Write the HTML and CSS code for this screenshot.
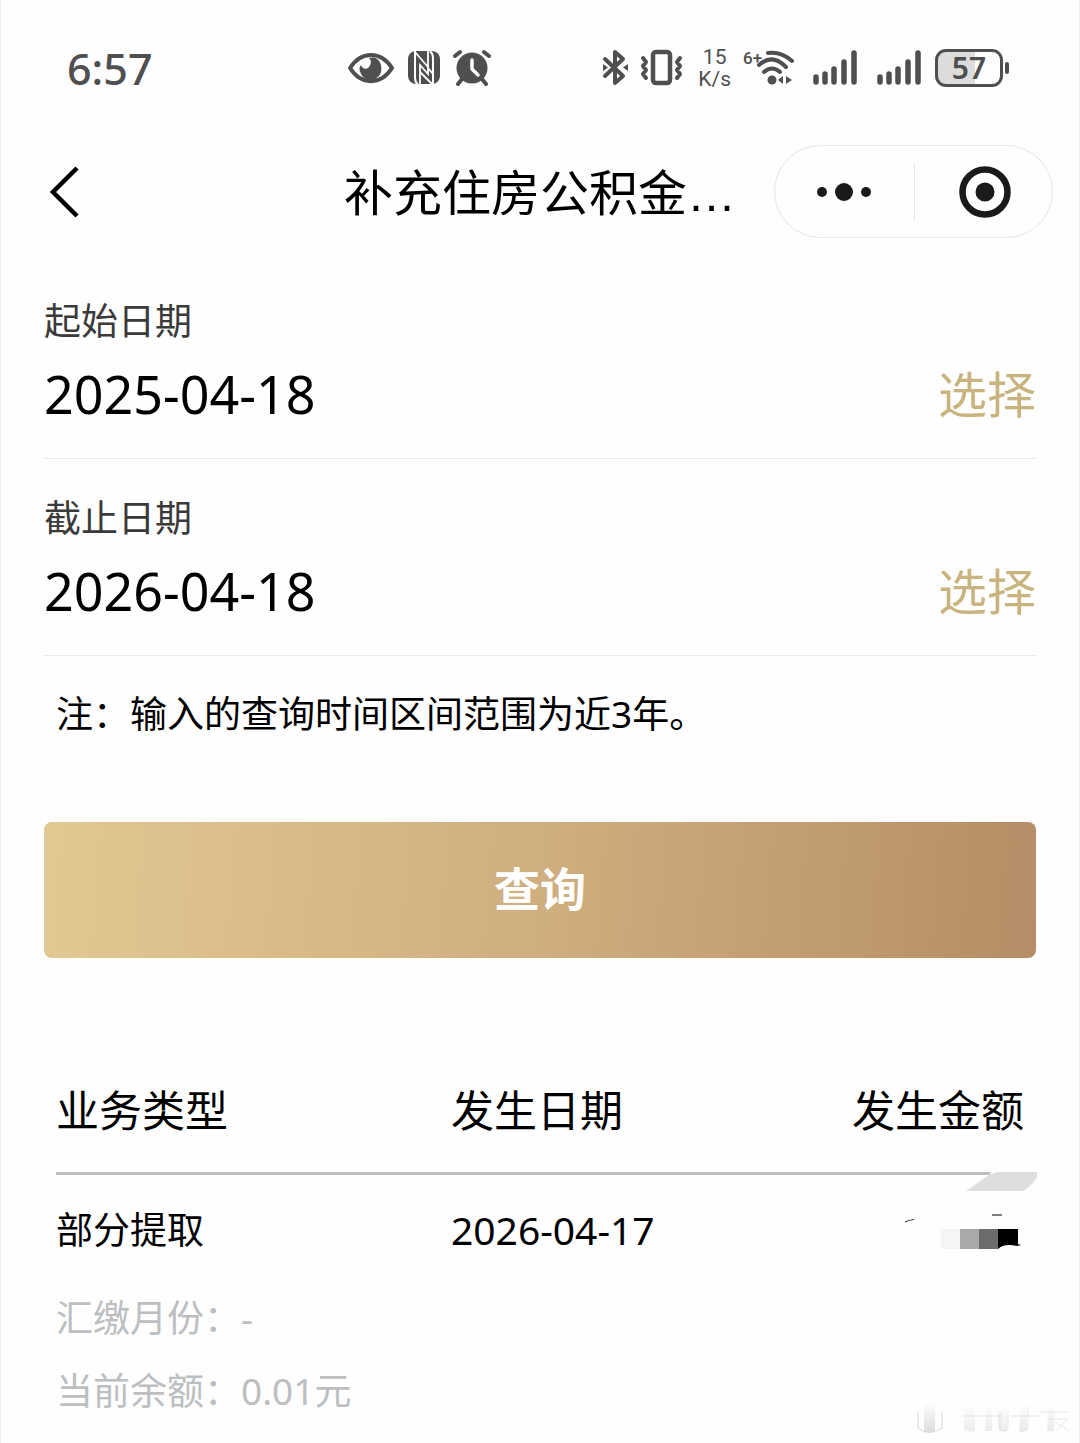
FILE: index.html
```html
<!DOCTYPE html>
<html lang="zh-CN">
<head>
    <meta charset="utf-8" />
    <meta name="viewport" content="width=device-width, initial-scale=1">
    <title>补充住房公积金</title>
    <link rel="stylesheet" href="styles.css">
</head>
<body>
    <div class="status">
        <span class="time">6:57</span>
        <div class="icons icons-left">
            <svg width="48" height="40" viewBox="0 0 48 40">
                <path d="M3 20C14 2.500 34 2.500 45 20C34 37.500 14 37.500 3 20Z" fill="none" stroke="#4f4f4f" stroke-width="4" stroke-linejoin="round"/>
                <path d="M22 10C31 7 36 16 34 24C31 34 18 34 14 26C12 22 12 19 14 17C15 21 20 22 22 19C24 16 25 13 22 10Z" fill="#4f4f4f"/>
            </svg>
            <svg width="34" height="40" viewBox="0 0 34 40">
                <rect x="1" y="3" width="32" height="33" rx="8" fill="#4f4f4f"/>
                <path d="M8 3V30Q8 34 11 37M26 36V10Q26 6 23 3" fill="none" stroke="#fefefe" stroke-width="2"/>
                <path d="M8 4L21 19V26L13 17V36" fill="none" stroke="#fefefe" stroke-width="1.800"/>
                <path d="M13 24L25 36M21 3V20L26 26" fill="none" stroke="#fefefe" stroke-width="1.800"/>
            </svg>
            <svg width="38" height="40" viewBox="0 0 38 40">
                <circle cx="19" cy="20" r="15.500" fill="#4f4f4f"/>
                <path d="M2 8L7 4M36 8L31 4M9 31L5 36M29 31L33 36" stroke="#4f4f4f" stroke-width="4" stroke-linecap="round"/>
                <path d="M19 12V21L25 27" fill="none" stroke="#fefefe" stroke-width="3.500" stroke-linecap="round" stroke-linejoin="round"/>
            </svg>
        </div>
        <div class="icons icons-right">
            <svg width="26" height="40" viewBox="0 0 26 40">
                <path d="M3 11L21 28L13 35V4L21 11L3 28" fill="none" stroke="#4f4f4f" stroke-width="4" stroke-linecap="round" stroke-linejoin="round"/>
                <path d="M1 16L6 19.500L1 23ZM26 16L21 19.500L26 23Z" fill="#4f4f4f"/>
            </svg>
            <svg class="vibrate" width="44" height="40" viewBox="0 0 44 40">
                <rect x="13" y="4" width="17" height="31" rx="3" fill="none" stroke="#4f4f4f" stroke-width="4.500"/>
                <path d="M3 10L6 14L3 18L6 22L3 26L6 30M40 10L37 14L40 18L37 22L40 26L37 30" fill="none" stroke="#4f4f4f" stroke-width="4" stroke-linecap="round" stroke-linejoin="round"/>
            </svg>
            <div class="speed">
                <span>15</span>
                <span>K/s</span>
            </div>
            <div class="wifi">
                <span class="wifi-gen">6+</span>
                <svg width="40" height="40" viewBox="0 0 40 40">
                    <path d="M14 5Q27 3 38 13M5 17Q18 5 32 19M10 24Q18 17 26 24" fill="none" stroke="#4f4f4f" stroke-width="4" stroke-linecap="round"/>
                    <circle cx="18" cy="32" r="4.500" fill="#4f4f4f"/>
                    <path d="M24 32L29 28V36ZM38 32L32 28V36Z" fill="#4f4f4f"/>
                </svg>
            </div>
            <svg class="signal" width="44" height="40" viewBox="0 0 44 40">
                <path d="M3 29V34M12 26V34M21 21V34M31 14V34M41 5V34" stroke="#4f4f4f" stroke-width="5.500" stroke-linecap="round"/>
            </svg>
            <svg class="signal" width="44" height="40" viewBox="0 0 44 40">
                <path d="M3 29V34M12 26V34M21 21V34M31 14V34M41 5V34" stroke="#4f4f4f" stroke-width="5.500" stroke-linecap="round"/>
            </svg>
            <div class="battery"><span>57</span></div>
        </div>
    </div>

    <header class="nav">
        <button class="back" type="button" aria-label="返回">
            <svg width="32" height="54" viewBox="0 0 32 54">
                <path d="M28 3L4 27L28 51" fill="none" stroke="#000" stroke-width="4.500"/>
            </svg>
        </button>
        <h1>补充住房公积金…</h1>
        <div class="capsule">
            <button type="button" aria-label="更多">
                <svg width="56" height="20" viewBox="0 0 56 20">
                    <g fill="#1a1a1a"><circle cx="6" cy="10" r="5"/><circle cx="28" cy="10" r="9"/><circle cx="50" cy="10" r="5"/></g>
                </svg>
            </button>
            <button type="button" aria-label="关闭">
                <svg width="52" height="52" viewBox="0 0 52 52">
                    <circle cx="26" cy="26" r="22.500" fill="none" stroke="#1a1a1a" stroke-width="6.500"/>
                    <circle cx="26" cy="26" r="9.500" fill="#1a1a1a"/>
                </svg>
            </button>
        </div>
    </header>

    <main>
        <form>
            <div class="field">
                <label for="start">起始日期</label>
                <div class="field-row">
                    <input id="start" type="text" value="2025-04-18" readonly>
                    <button class="pick" type="button">选择</button>
                </div>
            </div>
            <div class="field">
                <label for="end">截止日期</label>
                <div class="field-row">
                    <input id="end" type="text" value="2026-04-18" readonly>
                    <button class="pick" type="button">选择</button>
                </div>
            </div>
            <p class="note">注：输入的查询时间区间范围为近3年。</p>
            <button class="query" type="button">查询</button>
        </form>

        <table class="records">
            <thead>
                <tr>
                    <th>业务类型</th>
                    <th>发生日期</th>
                    <th class="amount">发生金额</th>
                </tr>
            </thead>
            <tbody>
                <tr class="record">
                    <td>部分提取</td>
                    <td class="date">2026-04-17</td>
                    <td class="amount">
                        <!-- amount is masked -->
                        <svg class="mask" width="140" height="84" viewBox="0 0 140 84">
                            <path d="M94 0H140V10H86Z" fill="#fefefe"/>
                            <path d="M90 5L98 2H138V7Q133 16 124 21H67Z" fill="#dedede"/>
                            <path d="M93 45H103" fill="none" stroke="#555" stroke-width="1.500"/>
                            <path d="M6 52Q10 50 15 49.500" fill="none" stroke="#333" stroke-width="1.200"/>
                            <path d="M42 59H61V79H42Z" fill="#f5f5f5"/>
                            <path d="M61 59H80V79H61Z" fill="#a9a9a9"/>
                            <path d="M80 59H99V79H80Z" fill="#6c6c6c"/>
                            <path d="M99 59H119V74L122 75L118 76Q105 73 99 79Z" fill="#000"/>
                        </svg>
                    </td>
                </tr>
                <tr class="detail">
                    <td colspan="3">汇缴月份：-</td>
                </tr>
                <tr class="detail">
                    <td colspan="3">当前余额：0.01元</td>
                </tr>
            </tbody>
        </table>
    </main>

    <!-- faded watermark -->
    <svg class="watermark" width="158" height="40" viewBox="0 0 158 40" aria-hidden="true">
        <defs>
            <linearGradient id="fade" x1="0" y1="0" x2="0" y2="1">
                <stop offset="0" stop-color="#bbb" stop-opacity="0"/>
                <stop offset="1" stop-color="#bbb" stop-opacity=".5"/>
            </linearGradient>
        </defs>
        <g fill="url(#fade)">
            <path d="M9 4H20V32Q14 34 9 32Z"/>
            <path d="M49 6H60V32Q54 34 49 30Z" opacity=".5"/>
            <path d="M72 6H77V32H70Z" opacity=".6"/>
            <path d="M80 6H92V32H84Z" opacity=".5"/>
            <path d="M106 4H112V32H104Z" opacity=".6"/>
            <path d="M134 4H139V32H132Z" opacity=".6"/>
        </g>
        <g fill="none" stroke="#d0d0d0" stroke-width="1">
            <path d="M3 12V29Q14 38 27 29V12" opacity=".8"/>
            <path d="M47 17H88M85 12V31Q92 34 93 28V12M96 17H126M113 8V29Q112 33 105 32M124 13H154M132 20H153L141 32M139 22L154 32" opacity=".5"/>
        </g>
    </svg>
</body>
</html>
```

FILE: styles.css
```css
* {
    box-sizing: border-box;
}
body {
    position: relative;
    min-height: 100vh;
    margin: 0;
    border: solid #ececec;
    border-width: 0 1px;
    background: #fefefe;
    color: #000;
    font-family: "Noto Sans", "Noto Sans CJK SC", sans-serif;
}
button, input {
    margin: 0;
    padding: 0;
    border: 0;
    background: none;
    color: inherit;
    font-family: inherit;
}
svg {
    display: block;
    flex: none;
}

/* status bar */
.status {
    display: flex;
    align-items: center;
    height: 136px;
    padding: 0 70px 0 66px;
    color: #4f4f4f;
}
.time {
    flex: 0 0 280px;
    font-size: 43px;
    font-weight: 500;
}
.icons {
    display: flex;
    align-items: center;
    gap: 12px;
}
.icons-right {
    margin-left: auto;
}
.vibrate {
    margin-right: 2px;
}
.speed {
    display: flex;
    flex-direction: column;
    align-items: center;
    font-family: Roboto, sans-serif;
    font-size: 21px;
    line-height: 22px;
}
.wifi {
    display: flex;
    margin-right: 7px;
}
.wifi-gen {
    width: 11px;
    font-family: Roboto, sans-serif;
    font-size: 17px;
    font-weight: 500;
    line-height: 20px;
    white-space: nowrap;
}
.signal {
    margin-right: 8px;
}
.signal + .signal {
    margin-right: 2px;
}
.battery {
    position: relative;
    width: 68px;
    height: 38px;
    margin-right: 6px;
    border: 3px solid #4f4f4f;
    border-radius: 11px;
    background: linear-gradient(to right, #dcdcdc 60%, #fefefe 60%);
    font-size: 30px;
    font-weight: 600;
    line-height: 32px;
    text-align: center;
}
.battery::after {
    content: "";
    position: absolute;
    top: 10px;
    right: -9px;
    width: 4px;
    height: 12px;
    border-radius: 2px;
    background: #4f4f4f;
}

/* title bar */
.nav {
    display: grid;
    grid-template-columns: 1fr auto 1fr;
    align-items: center;
    padding: 9px 26px 24px;
}
.back {
    justify-self: start;
    padding-left: 22px;
}
.nav h1 {
    margin: 0;
    padding-top: 4px;
    font-family: "Liberation Sans", "Noto Sans CJK SC", sans-serif;
    font-size: 49px;
    font-weight: 400;
    line-height: 72px;
    white-space: nowrap;
}
.capsule {
    display: grid;
    grid-template-columns: 1fr 1fr;
    justify-self: end;
    align-items: center;
    width: 279px;
    height: 93px;
    border: 1px solid #e6e6e6;
    border-radius: 47px;
}
.capsule button {
    display: flex;
    align-items: center;
    justify-content: center;
    height: 56px;
}
.capsule button + button {
    padding-left: 4px;
    border-left: 1px solid #e6e6e6;
}

main {
    padding: 0 43px;
}
.field {
    padding: 34px 0 28px;
    border-bottom: 1px solid #e9e9e9;
}
.field label {
    display: block;
    margin-bottom: 12px;
    color: #3a3a3a;
    font-size: 37px;
    line-height: 50px;
}
.field-row {
    display: flex;
    align-items: center;
    height: 72px;
}
.field input {
    flex: 1;
    min-width: 0;
    font-size: 52px;
    line-height: 72px;
    outline: none;
}
.pick {
    color: #c9b37f;
    font-size: 49px;
    line-height: 72px;
}
.note {
    margin: 0;
    padding: 31px 12px 81px;
    font-size: 37px;
    line-height: 54px;
}
.query {
    display: block;
    width: 100%;
    height: 136px;
    padding-bottom: 8px;
    border-radius: 8px;
    background: linear-gradient(95deg, #e2c893, #cfae7f 50%, #b68d66);
    color: #fff;
    font-size: 46px;
    font-weight: 700;
}

/* records */
.records {
    width: calc(100% - 12px);
    margin: 123px 0 0 12px;
    border-collapse: separate;
    border-spacing: 0;
    table-layout: fixed;
}
.records th, .records td {
    padding: 0;
    text-align: left;
}
.records th {
    padding-bottom: 31px;
    border-bottom: 3px solid #bdbdbd;
    font-size: 43px;
    font-weight: 400;
    line-height: 60px;
}
.records th:first-child {
    width: 40%;
}
.records th:nth-child(2), .records .date {
    padding-left: 3px;
}
.records .amount {
    padding-right: 12px;
    text-align: right;
}
.records .record td {
    position: relative;
    padding-top: 28px;
    padding-bottom: 24px;
    font-size: 37px;
    line-height: 54px;
}
.records .record .date {
    font-size: 39px;
}
.mask {
    position: absolute;
    top: -5px;
    right: -3px;
}
.records .detail td {
    color: #bcbfc1;
    font-size: 37px;
    line-height: 73px;
}

.watermark {
    position: absolute;
    right: 6px;
    bottom: 4px;
}
```
